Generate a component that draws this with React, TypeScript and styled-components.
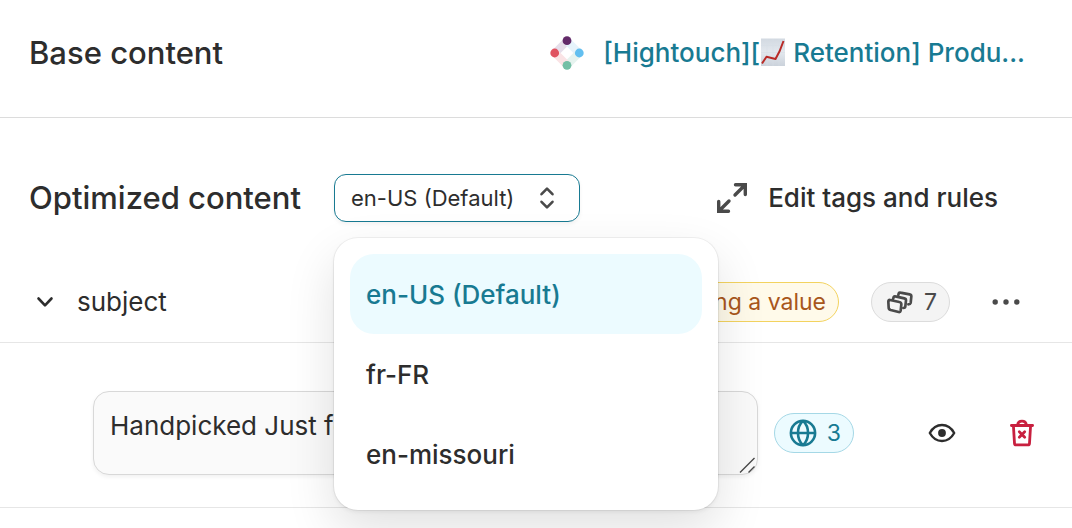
import React, { useState } from "react";
import styled, { createGlobalStyle, css } from "styled-components";

const GlobalStyle = createGlobalStyle`
  *, *::before, *::after { box-sizing: border-box; }
  body {
    margin: 0;
    background: #fff;
    color: #2d2d2d;
    font-family: Inter, "Liberation Sans", sans-serif;
  }
  button, select, textarea { font: inherit; color: inherit; margin: 0; }
  svg { display: block; flex: none; }
`;

const Page = styled.main`
  display: flex;
  flex-direction: column;
  min-height: 100vh;
`;

const BaseHeader = styled.header`
  display: flex;
  align-items: center;
  justify-content: space-between;
  gap: 32px;
  padding: 32px 47px 43px 29px;
  border-bottom: 1px solid #dcdcdc;
`;

const Title = styled.h2`
  margin: 0;
  font-size: 31px;
  line-height: 42px;
  font-weight: 500;
  white-space: nowrap;
`;

const Source = styled.div`
  display: flex;
  align-items: center;
  gap: 18px;
  min-width: 0;
`;

const SourceLink = styled.a`
  display: flex;
  align-items: center;
  color: #187a92;
  font-size: 26px;
  line-height: 40px;
  font-weight: 500;
  text-decoration: none;
  white-space: pre;
`;

const SectionBar = styled.div`
  display: flex;
  align-items: center;
  padding: 56px 74px 40px 29px;
`;

const Picker = styled.div`
  position: relative;
  display: flex;
  align-items: center;
  margin-left: 33px;
`;

const PickerSelect = styled.select`
  appearance: none;
  width: 246px;
  height: 48px;
  padding: 0 48px 0 16px;
  border: 1px solid #187a92;
  border-radius: 12px;
  background: #fff;
  box-shadow: 0 2px 4px rgba(0, 0, 0, 0.05);
  font-size: 22px;
  outline: none;
  cursor: pointer;
`;

const PickerArrows = styled.span`
  position: absolute;
  right: 25px;
  pointer-events: none;
`;

const Menu = styled.ul`
  position: absolute;
  z-index: 2;
  top: 64px;
  left: 0;
  width: 384px;
  margin: 0;
  padding: 16px;
  list-style: none;
  border-radius: 24px;
  background: #fff;
  box-shadow:
    0 0 0 1px rgba(0, 0, 0, 0.05),
    0 2px 4px rgba(0, 0, 0, 0.06),
    0 20px 50px rgba(0, 0, 0, 0.12);
`;

const MenuItem = styled.button<{ $selected: boolean }>`
  display: block;
  width: 100%;
  height: 80px;
  padding: 0 16px;
  border: 0;
  border-radius: 24px;
  background: transparent;
  font-size: 26px;
  font-weight: 500;
  text-align: left;
  cursor: pointer;
  ${(p) =>
    p.$selected &&
    css`
      background: #ecfbff;
      color: #187a92;
    `}
`;

const TextButton = styled.button`
  display: flex;
  align-items: center;
  gap: 20px;
  margin-left: auto;
  padding: 0;
  border: 0;
  background: none;
  font-size: 26px;
  line-height: 40px;
  font-weight: 500;
  white-space: nowrap;
  cursor: pointer;
`;

const FieldRow = styled.div`
  display: flex;
  align-items: center;
  height: 80px;
  padding: 0 42px 0 36px;
  border-bottom: 1px solid #e6e6e6;
  box-sizing: content-box;
`;

const FieldName = styled.span`
  margin-left: 23px;
  font-size: 26px;
  line-height: 40px;
`;

const FieldTools = styled.div`
  display: flex;
  align-items: center;
  gap: 32px;
  margin-left: auto;
`;

const IconButton = styled.button`
  display: grid;
  place-items: center;
  padding: 0;
  border: 0;
  background: none;
  cursor: pointer;
`;

const MoreButton = styled(IconButton)`
  width: 48px;
  height: 48px;
`;

const tones = {
  warning: css`
    background: #fffaea;
    border-color: #f3d35f;
    color: #a8561b;
  `,
  neutral: css`
    background: #f4f4f4;
    border-color: #dcdcdc;
    color: #4a4a4a;
  `,
  info: css`
    background: #ecfbff;
    border-color: #a5d8e6;
    color: #187a92;
  `,
};

const Pill = styled.span<{ $tone: keyof typeof tones }>`
  display: flex;
  align-items: center;
  gap: 10px;
  height: 40px;
  padding: 0 12px;
  border: 1px solid;
  border-radius: 20px;
  font-size: 23px;
  white-space: nowrap;
  ${(p) => tones[p.$tone]}
`;

const CountPill = styled(Pill)`
  padding: 0 12px 0 14px;
`;

const VariantRow = styled.div`
  display: flex;
  align-items: center;
  padding: 48px 38px 32px 93px;
  border-bottom: 1px solid #e6e6e6;
`;

const TextAreaWrap = styled.div`
  position: relative;
  display: flex;
  flex: 1;
  min-width: 0;
  margin-right: 16px;
`;

const TextArea = styled.textarea`
  width: 100%;
  height: 84px;
  padding: 15px 16px;
  border: 1px solid #d8d8d8;
  border-radius: 16px;
  background: #fafafa;
  box-shadow: 0 2px 4px rgba(0, 0, 0, 0.06);
  font-size: 26px;
  line-height: 38px;
  resize: vertical;
  outline: none;
  &::-webkit-resizer { display: none; }
`;

const Grip = styled.span`
  position: absolute;
  right: 1px;
  bottom: 1px;
  pointer-events: none;
`;

const VariantTools = styled.div`
  display: flex;
  align-items: center;
  gap: 54px;
  margin-left: 74px;
`;

const SourceLogo = () => (
  <svg width="36" height="36" viewBox="0 0 36 36" aria-hidden="true">
    <g strokeWidth="8" fill="none">
      <path d="M6 18 18 6" stroke="#e6deea" />
      <path d="M18 6 30 18" stroke="#e6f3fb" />
      <path d="M30 18 18 30" stroke="#e6f3ef" />
      <path d="M18 30 6 18" stroke="#fae3e5" />
    </g>
    <circle cx="18" cy="5.7" r="4.4" fill="#632a69" />
    <circle cx="30.3" cy="18" r="4.4" fill="#63bff0" />
    <circle cx="18" cy="30.3" r="4.4" fill="#73bfa5" />
    <circle cx="5.7" cy="18" r="4.4" fill="#e05260" />
  </svg>
);

const ChartGlyph = () => (
  <svg width="26" height="30" viewBox="0 0 26 30" role="img" aria-label="chart increasing">
    <defs>
      <linearGradient id="paper" x1="0" y1="0" x2="0" y2="1">
        <stop offset="0" stopColor="#d2d9e1" />
        <stop offset="0.5" stopColor="#e3e8ee" />
        <stop offset="1" stopColor="#cbd2db" />
      </linearGradient>
    </defs>
    <rect x="1" y="0.500" width="24" height="27.500" fill="url(#paper)" />
    <path d="M1 7.500H25M1 14.500H25M1 21.500H25M7 1V28M13 1V28M19 1V28" stroke="#d5dce5" strokeWidth="0.500" />
    <path d="M2 25.500 6.500 18.800 15.500 21 19.700 13 23.500 3" fill="none" stroke="#b92b27" strokeWidth="2" strokeLinejoin="round" />
  </svg>
);

const UpDown = () => (
  <svg width="16" height="24" viewBox="0 0 16 24" fill="none" stroke="#4a4a4a" strokeWidth="2.600" strokeLinecap="round" strokeLinejoin="round" aria-hidden="true">
    <path d="M2.500 8.200 8 2.600l5.500 5.600M2.500 15.800l5.500 5.600 5.500-5.600" />
  </svg>
);

const Expand = () => (
  <svg width="32" height="32" viewBox="0 0 32 32" fill="none" stroke="#4a4a4a" strokeWidth="3.400" strokeLinecap="round" aria-hidden="true">
    <path d="M19.500 2.700H29.300V12.500M29 3 19 13M2.700 19.500V29.300H12.500M3 29 13 19" />
  </svg>
);

const ChevronDown = () => (
  <svg width="18" height="12" viewBox="0 0 18 12" fill="none" stroke="#2d2d2d" strokeWidth="2.600" strokeLinecap="round" strokeLinejoin="round" aria-hidden="true">
    <path d="M2.500 2.500 9 9.300l6.500-6.800" />
  </svg>
);

const Stack = () => (
  <svg width="28" height="24" viewBox="0 0 84 72" fill="none" stroke="currentColor" strokeWidth="8" strokeLinecap="round" strokeLinejoin="round" aria-hidden="true">
    <path d="M12 30 40 36Q46 37 46 43L44 62Q43 67 38 66L14 60Q8 58 8 53L7 35Q7 29 12 30Z" />
    <path d="M21 27 23 22Q24 18 28 19L55 25Q60 26 60 31L58 49Q58 54 52 54" />
    <path d="M37 15 38 11Q39 7 43 8L71 13Q76 14 76 19L74 39Q73 43 67 43" />
  </svg>
);

const Dots = () => (
  <svg width="30" height="8" viewBox="0 0 30 8" fill="#4a4a4a" aria-hidden="true">
    <circle cx="4.200" cy="4" r="2.700" />
    <circle cx="15" cy="4" r="2.700" />
    <circle cx="25.800" cy="4" r="2.700" />
  </svg>
);

const Globe = () => (
  <svg width="28" height="28" viewBox="0 0 28 28" fill="none" stroke="currentColor" strokeWidth="2.600" aria-hidden="true">
    <circle cx="14" cy="14" r="12.100" />
    <path d="M1.800 14H26.200M14 1.800C7.300 8 7.300 20 14 26.200M14 1.800C20.700 8 20.700 20 14 26.200" />
  </svg>
);

const Eye = () => (
  <svg width="28" height="20" viewBox="0 0 28 20" fill="none" aria-hidden="true">
    <path d="M1.800 10C4.800 4.600 9 2 14 2s9.200 2.600 12.200 8C23.200 15.400 19 18 14 18S4.800 15.400 1.800 10Z" stroke="#2d2d2d" strokeWidth="2.400" strokeLinejoin="round" />
    <circle cx="14" cy="10" r="3.900" fill="#2d2d2d" />
  </svg>
);

const Trash = () => (
  <svg width="24" height="28" viewBox="0 0 24 28" fill="none" stroke="#c8203f" strokeWidth="2.800" strokeLinecap="round" strokeLinejoin="round" aria-hidden="true">
    <path d="M1.400 6.500H22.600M7.600 6C8.200 0.800 15.800 0.800 16.400 6M3.400 6.500 4.500 24.300Q4.600 25.900 6.200 25.900H17.800Q19.400 25.900 19.500 24.300L20.600 6.500" />
    <path d="M9.300 12.800 14.700 18.200M14.700 12.800 9.300 18.200" />
  </svg>
);

const locales = ["en-US (Default)", "fr-FR", "en-missouri"];

export default function App() {
  const [locale, setLocale] = useState(locales[0]);
  const [open, setOpen] = useState(true);
  const [subject, setSubject] = useState("Handpicked Just for You");

  return (
    <>
      <GlobalStyle />
      <Page>
        <BaseHeader>
          <Title>Base content</Title>
          <Source>
            <SourceLogo />
            <SourceLink href="#source">
              [Hightouch][
              <ChartGlyph />
              {" Retention] Produ..."}
            </SourceLink>
          </Source>
        </BaseHeader>

        <SectionBar>
          <Title>Optimized content</Title>
          <Picker>
            <PickerSelect
              aria-label="Locale"
              value={locale}
              onChange={(e) => setLocale(e.target.value)}
              onMouseDown={(e) => {
                e.preventDefault();
                setOpen(!open);
              }}
            >
              {locales.map((name) => (
                <option key={name}>{name}</option>
              ))}
            </PickerSelect>
            <PickerArrows>
              <UpDown />
            </PickerArrows>
            {open && (
              <Menu>
                {locales.map((name) => (
                  <li key={name}>
                    <MenuItem
                      type="button"
                      $selected={name === locale}
                      onClick={() => {
                        setLocale(name);
                        setOpen(false);
                      }}
                    >
                      {name}
                    </MenuItem>
                  </li>
                ))}
              </Menu>
            )}
          </Picker>
          <TextButton type="button">
            <Expand />
            Edit tags and rules
          </TextButton>
        </SectionBar>

        <FieldRow>
          <IconButton type="button" aria-label="Collapse subject">
            <ChevronDown />
          </IconButton>
          <FieldName id="subject-label">subject</FieldName>
          <FieldTools>
            <Pill $tone="warning">Missing a value</Pill>
            <CountPill $tone="neutral">
              <Stack />7
            </CountPill>
            <MoreButton type="button" aria-label="More options">
              <Dots />
            </MoreButton>
          </FieldTools>
        </FieldRow>

        <VariantRow>
          <TextAreaWrap>
            <TextArea
              aria-labelledby="subject-label"
              value={subject}
              onChange={(e) => setSubject(e.target.value)}
            />
            <Grip>
              <svg width="18" height="18" viewBox="0 0 18 18" stroke="#4a4a4a" strokeWidth="1.400" aria-hidden="true">
                <path d="M1 16.500 15.500 2M9.500 16.500 15.500 10.500" />
              </svg>
            </Grip>
          </TextAreaWrap>
          <CountPill $tone="info">
            <Globe />3
          </CountPill>
          <VariantTools>
            <IconButton type="button" aria-label="Preview">
              <Eye />
            </IconButton>
            <IconButton type="button" aria-label="Delete">
              <Trash />
            </IconButton>
          </VariantTools>
        </VariantRow>
      </Page>
    </>
  );
}
